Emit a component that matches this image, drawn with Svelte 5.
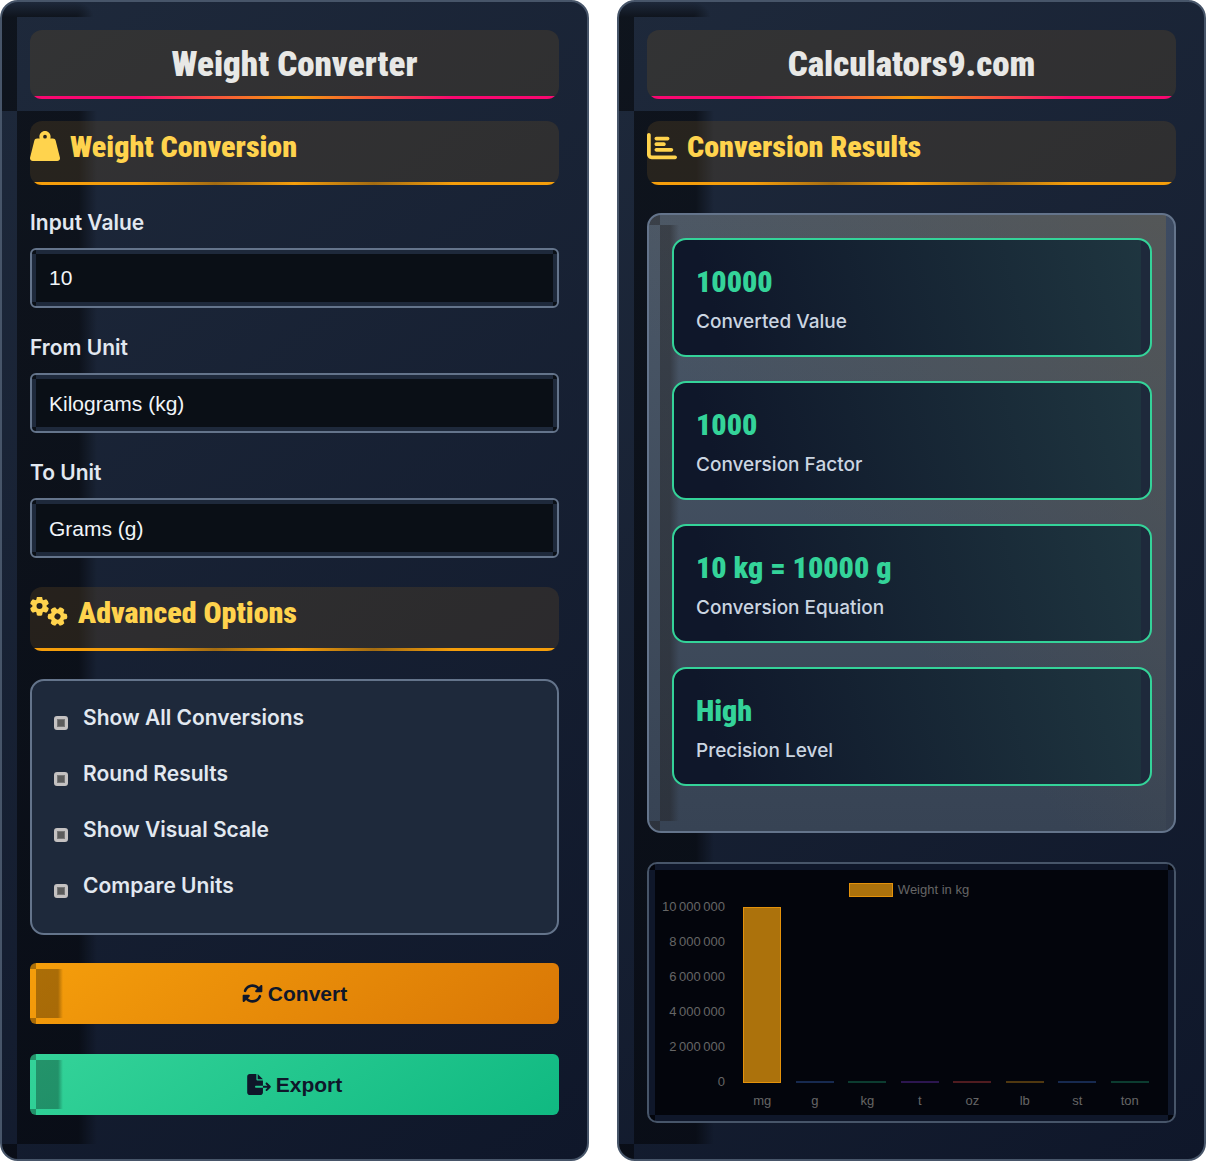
<script>
	let inputValue = $state('10');
	let fromUnit = $state('kg');
	let toUnit = $state('g');

	const units = [
		{ id: 'kg', name: 'Kilograms (kg)' },
		{ id: 'g', name: 'Grams (g)' }
	];

	const options = ['Show All Conversions', 'Round Results', 'Show Visual Scale', 'Compare Units'];

	const results = [
		{ value: '10000', label: 'Converted Value' },
		{ value: '1000', label: 'Conversion Factor' },
		{ value: '10 kg = 10000 g', label: 'Conversion Equation' },
		{ value: 'High', label: 'Precision Level' }
	];

	const max = 10000000;
	const ticks = [10000000, 8000000, 6000000, 4000000, 2000000, 0];
	const bars = [
		{ unit: 'mg', value: 10000000, color: 'amber' },
		{ unit: 'g', value: 10000, color: 'blue' },
		{ unit: 'kg', value: 10, color: 'green' },
		{ unit: 't', value: 0.01, color: 'purple' },
		{ unit: 'oz', value: 352.74, color: 'red' },
		{ unit: 'lb', value: 22.05, color: 'gold' },
		{ unit: 'st', value: 1.57, color: 'blue' },
		{ unit: 'ton', value: 0.01, color: 'green' }
	];

	// narrow no-break space between groups of thousands
	function formatTick(n) {
		return String(n).replace(/\B(?=(\d{3})+$)/g, '\u202f');
	}
</script>

<main>
	<section class="panel">
		<h1>Weight Converter</h1>

		<h2>
			<svg width="30" height="30" viewBox="0 0 512 512"><path d="M224 96a32 32 0 1 1 64 0 32 32 0 1 1-64 0zm122.500 32c3.500-10 5.500-20.800 5.500-32c0-53-43-96-96-96s-96 43-96 96c0 11.200 1.900 22 5.500 32L120 128c-22 0-41.200 15-46.600 36.400l-72 288c-3.600 14.300-.4 29.500 8.700 41.200S33.200 512 48 512l416 0c14.800 0 28.700-6.800 37.800-18.500s12.300-26.800 8.700-41.200l-72-288C433.200 143 414 128 392 128l-45.500 0z" /></svg>
			<span>Weight Conversion</span>
		</h2>

		<div class="field">
			<label for="input-value">Input Value</label>
			<input id="input-value" type="text" bind:value={inputValue} />
		</div>
		<div class="field">
			<label for="from-unit">From Unit</label>
			<select id="from-unit" bind:value={fromUnit}>
				{#each units as u}
					<option value={u.id}>{u.name}</option>
				{/each}
			</select>
		</div>
		<div class="field">
			<label for="to-unit">To Unit</label>
			<select id="to-unit" bind:value={toUnit}>
				{#each units as u}
					<option value={u.id}>{u.name}</option>
				{/each}
			</select>
		</div>

		<h2 class="advanced">
			<svg width="38" height="30" viewBox="0 0 38 30">
				<defs>
					<g id="gear">
						<circle r="5" fill="none" stroke="#ffd34d" stroke-width="4" />
						{#each [0, 60, 120, 180, 240, 300] as angle}
							<path d="M-3.300-5.500L-2.600-9.200Q0-10.400 2.600-9.200L3.300-5.500z" transform="rotate({angle})" />
						{/each}
					</g>
				</defs>
				<use href="#gear" transform="translate(9.500 9)" />
				<use href="#gear" transform="translate(27.500 19.500) rotate(30)" />
			</svg>
			<span>Advanced Options</span>
		</h2>

		<div class="options">
			{#each options as option}
				<label class="option">
					<input type="checkbox" />
					<span>{option}</span>
				</label>
			{/each}
		</div>

		<button class="convert">
			<svg width="21" height="21" viewBox="0 0 512 512"><path d="M142.900 142.900c-17.500 17.500-30.100 38-37.800 59.800c-5.900 16.700-24.200 25.400-40.800 19.500s-25.400-24.200-19.500-40.800C55.600 150.700 73.200 122 97.600 97.600c87.200-87.200 228.300-87.500 315.800-1L455 55c6.900-6.900 17.200-8.900 26.200-5.200s14.800 12.500 14.800 22.200l0 128c0 13.300-10.700 24-24 24L344 224c-9.700 0-18.500-5.800-22.200-14.800s-1.700-19.300 5.200-26.200l41.100-41.100c-62.600-61.500-163.100-61.200-225.300 1zM16 312c0-13.300 10.700-24 24-24L168 288c9.700 0 18.500 5.800 22.200 14.800s1.700 19.300-5.200 26.200l-41.100 41.100c62.600 61.500 163.100 61.200 225.300-1c17.500-17.500 30.100-38 37.800-59.800c5.900-16.700 24.200-25.400 40.800-19.500s25.400 24.200 19.500 40.800c-10.800 30.600-28.400 59.300-52.900 83.800c-87.200 87.200-228.300 87.500-315.800 1L57 457c-6.900 6.900-17.200 8.900-26.200 5.200S16 449.700 16 440z" /></svg>
			Convert
		</button>
		<button class="export">
			<svg width="24" height="21" viewBox="0 0 576 512"><path d="M0 64C0 28.700 28.700 0 64 0L224 0l0 128c0 17.700 14.300 32 32 32l128 0 0 128-168 0c-13.300 0-24 10.700-24 24s10.700 24 24 24l168 0 0 112c0 35.300-28.700 64-64 64L64 512c-35.300 0-64-28.700-64-64L0 64zM384 336l0-48 110.100 0-39-39c-9.400-9.400-9.400-24.600 0-33.900s24.600-9.400 33.900 0l80 80c9.400 9.400 9.400 24.600 0 33.900l-80 80c-9.400 9.400-24.600 9.400-33.900 0s-9.400-24.600 0-33.900l39-39L384 336zm0-208l-128 0L256 0 384 128z" /></svg>
			Export
		</button>
	</section>

	<section class="panel">
		<h1>Calculators9.com</h1>

		<h2>
			<svg width="30" height="30" viewBox="0 0 512 512"><path d="M32 32c17.700 0 32 14.300 32 32l0 336c0 8.800 7.200 16 16 16l400 0c17.700 0 32 14.300 32 32s-14.300 32-32 32L80 480c-44.200 0-80-35.800-80-80L0 64C0 46.300 14.300 32 32 32zm96 96c0-17.700 14.300-32 32-32l192 0c17.700 0 32 14.300 32 32s-14.300 32-32 32l-192 0c-17.700 0-32-14.300-32-32zm32 64l128 0c17.700 0 32 14.300 32 32s-14.300 32-32 32l-128 0c-17.700 0-32-14.300-32-32s14.300-32 32-32zm0 96l256 0c17.700 0 32 14.300 32 32s-14.300 32-32 32l-256 0c-17.700 0-32-14.300-32-32s14.300-32 32-32z" /></svg>
			<span>Conversion Results</span>
		</h2>

		<div class="results">
			{#each results as result}
				<div class="card">
					<div class="value">{result.value}</div>
					<div class="name">{result.label}</div>
				</div>
			{/each}
		</div>

		<div class="chart">
			<div class="legend"><span class="swatch"></span>Weight in kg</div>
			<div class="plot">
				<div class="ticks">
					{#each ticks as tick}
						<span>{formatTick(tick)}</span>
					{/each}
				</div>
				<div class="columns">
					{#each bars as bar}
						<div class="column">
							<div class="track">
								<div class="bar {bar.color}" style="height: {(bar.value / max) * 100}%"></div>
							</div>
							<span>{bar.unit}</span>
						</div>
					{/each}
				</div>
			</div>
		</div>
	</section>
</main>

<style>
	:global(body) {
		background: #fff;
	}
	* {
		box-sizing: border-box;
	}
	main {
		display: grid;
		grid-template-columns: 1fr 1fr;
		gap: 28px;
		font-family: Inter, sans-serif;
		color: #e2e8f0;
	}
	.panel {
		--shade: rgba(0, 0, 0, 0.5);
		padding: 28px 28px 36px;
		border: 2px solid #475569;
		border-radius: 18px;
		background:
			linear-gradient(var(--shade), var(--shade)) 0 15px / 15px 94px no-repeat,
			linear-gradient(transparent, var(--shade)) 0 0 / 74px 15px no-repeat,
			radial-gradient(ellipse at 0 100%, var(--shade), transparent 70%) 74px 0 / 18px 15px no-repeat,
			linear-gradient(90deg, var(--shade) 62px, transparent 80px) 15px 109px / 80px calc(100% - 124px) no-repeat,
			linear-gradient(var(--shade), var(--shade)) 0 100% / 15px 15px no-repeat,
			linear-gradient(145deg, #1e293b, #0f172a);
	}
	h1,
	h2 {
		position: relative;
		overflow: hidden;
		margin: 0;
		border-radius: 12px;
		background: rgba(116, 84, 34, 0.25);
		font-family: "Roboto Condensed", Roboto, sans-serif;
		font-weight: 900;
	}
	h1::after,
	h2::after {
		content: "";
		position: absolute;
		left: 0;
		right: 0;
		bottom: 0;
		height: 3px;
		background: linear-gradient(90deg, #f90870 20%, #f59e0b 50%, #f90870 80%);
	}
	h1 {
		height: 69px;
		font-size: 35px;
		line-height: 69px;
		text-align: center;
		color: #e8e8e6;
	}
	h2 {
		display: flex;
		gap: 10px;
		height: 64px;
		margin: 22px 0 28px;
		padding-top: 10px;
		font-size: 30px;
		line-height: 32px;
		color: #ffd34d;
	}
	h2::after {
		background: linear-gradient(90deg, #f59e0b 20%, #a36c12 35%, #f59e0b 50%, #a36c12 65%, #f59e0b 80%);
	}
	svg {
		display: block;
		fill: currentColor;
	}
	.field {
		display: flex;
		flex-direction: column;
		gap: 12px;
		margin-bottom: 27px;
	}
	h2 + .field {
		margin-top: -3px;
	}
	.field label,
	.option {
		font-size: 21px;
		font-weight: 600;
		line-height: 26px;
	}
	.field input,
	.field select {
		--dark: linear-gradient(#0a0f16, #0a0f16);
		width: 100%;
		height: 60px;
		padding: 0 17px;
		border: 2px solid #64748b;
		border-radius: 6px;
		appearance: none;
		background:
			var(--dark) 4px 4px / calc(100% - 8px) calc(100% - 8px) no-repeat,
			var(--dark) 0 0 / 4px 4px no-repeat,
			var(--dark) 100% 0 / 4px 4px no-repeat,
			var(--dark) 0 100% / 4px 4px no-repeat,
			var(--dark) 100% 100% / 4px 4px no-repeat,
			#1e293b;
		font-family: "Liberation Sans", Arial, sans-serif;
		font-size: 21px;
		color: #f1f5f9;
	}
	.advanced {
		margin-top: 29px;
	}
	.options {
		display: flex;
		flex-direction: column;
		gap: 30px;
		margin-bottom: 28px;
		padding: 24px 22px 34px;
		border: 2px solid #64748b;
		border-radius: 14px;
		background: #1e293b;
	}
	.option {
		display: flex;
		gap: 15px;
	}
	.option input {
		width: 14px;
		height: 14px;
		margin: 11px 0 0;
		appearance: none;
		border: 3px solid #c4c1c1;
		border-radius: 3px;
		background: #5c5c5c;
		box-shadow: inset 0 0 0 1px #777;
	}
	button {
		--shade: rgba(0, 0, 0, 0.3);
		display: flex;
		align-items: center;
		justify-content: center;
		gap: 5px;
		width: 100%;
		height: 61px;
		border: 0;
		border-radius: 6px;
		background:
			linear-gradient(90deg, var(--shade) 22px, transparent 27px) 6px 6px / 27px calc(100% - 12px) no-repeat,
			linear-gradient(var(--shade), var(--shade)) 0 0 / 6px 6px no-repeat,
			linear-gradient(var(--shade), var(--shade)) 0 100% / 6px 6px no-repeat,
			linear-gradient(145deg, var(--from), var(--to));
		font-family: "Liberation Sans", Arial, sans-serif;
		font-size: 21px;
		font-weight: 700;
		color: #0f172a;
	}
	.convert {
		--from: #f59e0b;
		--to: #d97706;
		margin-bottom: 30px;
	}
	.export {
		--from: #34d399;
		--to: #10b981;
	}
	.results {
		--shade: rgba(30, 28, 28, 0.4);
		display: flex;
		flex-direction: column;
		gap: 24px;
		padding: 23px 22px 45px 23px;
		border: 2px solid #64748b;
		border-radius: 14px;
		background:
			linear-gradient(90deg, var(--shade) 10px, transparent 19px) 11px 10px / 19px calc(100% - 20px) no-repeat,
			linear-gradient(var(--shade), var(--shade)) 0 0 / 11px 10px no-repeat,
			linear-gradient(var(--shade), var(--shade)) 0 100% / 11px 10px no-repeat,
			linear-gradient(#3d4b62, #374151) 100% 0 / 8px 100% no-repeat,
			linear-gradient(to bottom left, rgba(90, 86, 76, 0.6), transparent 60%),
			linear-gradient(#4b5868, #374354);
	}
	.card {
		height: 119px;
		padding: 24px 22px;
		border: 2px solid #34d399;
		border-radius: 14px;
		background:
			linear-gradient(#1e293b, #1e293b) 100% 0 / 9px 100% no-repeat,
			linear-gradient(75deg, #0f172a 10%, #1f3640);
	}
	.value {
		font-family: "Roboto Condensed", Roboto, sans-serif;
		font-size: 30px;
		font-weight: 900;
		line-height: 36px;
		color: #34d399;
	}
	.name {
		margin-top: 9px;
		font-size: 19px;
		font-weight: 500;
		line-height: 26px;
		color: #cbd5e1;
	}
	.chart {
		--dark: linear-gradient(#03050c, #03050c);
		margin-top: 29px;
		padding: 18px 18px 12px 13px;
		border: 2px solid #475569;
		border-radius: 10px;
		background:
			var(--dark) 6px 6px / calc(100% - 12px) calc(100% - 12px) no-repeat,
			var(--dark) 0 0 / 6px 6px no-repeat,
			var(--dark) 100% 0 / 6px 6px no-repeat,
			var(--dark) 0 100% / 6px 6px no-repeat,
			var(--dark) 100% 100% / 6px 6px no-repeat,
			#0f172a;
		font-family: "Liberation Sans", Arial, sans-serif;
		font-size: 13px;
		line-height: 16px;
		color: #666;
	}
	.legend {
		display: flex;
		align-items: center;
		justify-content: center;
		gap: 5px;
	}
	.swatch {
		width: 44px;
		height: 14px;
		border: 1px solid #e4920b;
		background: #ac720c;
	}
	.plot {
		display: flex;
		gap: 11px;
		margin-top: 1px;
	}
	.ticks {
		display: flex;
		flex-direction: column;
		gap: 19px;
		text-align: right;
	}
	.columns {
		display: flex;
		flex: 1;
		padding-top: 8px;
	}
	.column {
		display: flex;
		flex: 1;
		flex-direction: column;
		align-items: center;
		gap: 10px;
	}
	.track {
		display: flex;
		align-items: flex-end;
		width: 38px;
		height: 176px;
	}
	.bar {
		width: 100%;
		min-height: 2px;
	}
	.amber {
		border: 1px solid #e4920b;
		background: #ac720c;
	}
	.blue {
		background: #172a50;
	}
	.green {
		background: #0c3c30;
	}
	.purple {
		background: #2c1650;
	}
	.red {
		background: #501c20;
	}
	.gold {
		background: #503810;
	}
</style>
